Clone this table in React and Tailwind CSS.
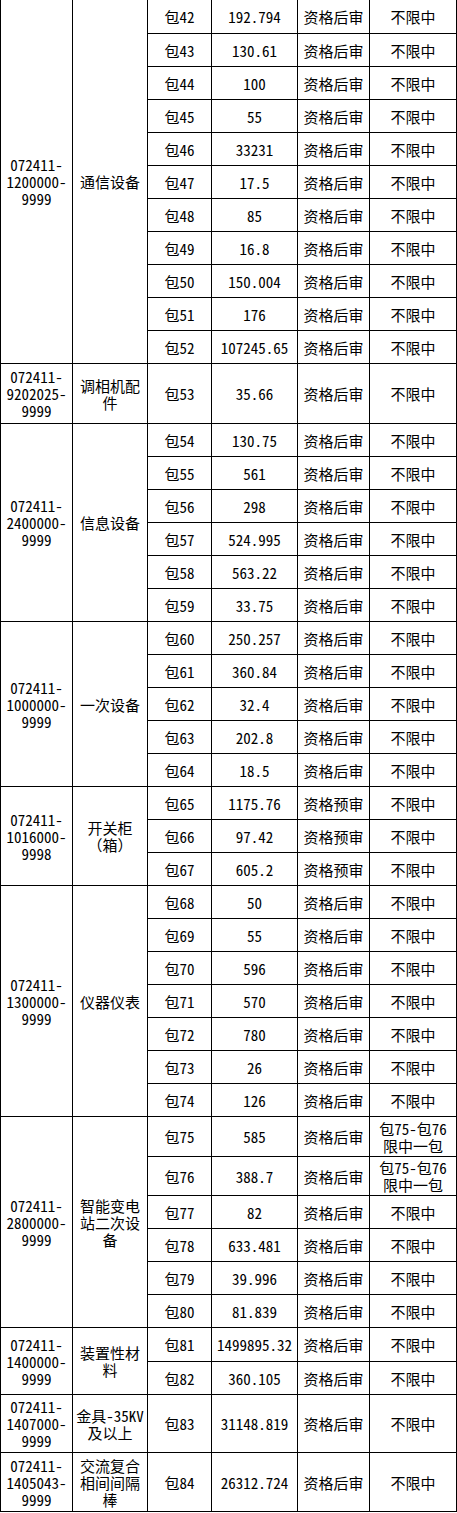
import React from "react";

const groups = [
  { code: ["072411-", "1200000-", "9999"], name: ["通信设备"], span: "row-span-11", rows: [
    ["包42", "192.794"], ["包43", "130.61"], ["包44", "100"], ["包45", "55"], ["包46", "33231"], ["包47", "17.5"], ["包48", "85"], ["包49", "16.8"], ["包50", "150.004"], ["包51", "176"], ["包52", "107245.65"],
  ]},
  { code: ["072411-", "9202025-", "9999"], name: ["调相机配", "件"], span: "row-span-1", rows: [["包53", "35.66"]] },
  { code: ["072411-", "2400000-", "9999"], name: ["信息设备"], span: "row-span-6", rows: [
    ["包54", "130.75"], ["包55", "561"], ["包56", "298"], ["包57", "524.995"], ["包58", "563.22"], ["包59", "33.75"],
  ]},
  { code: ["072411-", "1000000-", "9999"], name: ["一次设备"], span: "row-span-5", rows: [
    ["包60", "250.257"], ["包61", "360.84"], ["包62", "32.4"], ["包63", "202.8"], ["包64", "18.5"],
  ]},
  { code: ["072411-", "1016000-", "9998"], name: ["开关柜", "（箱）"], span: "row-span-3", rows: [
    ["包65", "1175.76", "资格预审"], ["包66", "97.42", "资格预审"], ["包67", "605.2", "资格预审"],
  ]},
  { code: ["072411-", "1300000-", "9999"], name: ["仪器仪表"], span: "row-span-7", rows: [
    ["包68", "50"], ["包69", "55"], ["包70", "596"], ["包71", "570"], ["包72", "780"], ["包73", "26"], ["包74", "126"],
  ]},
  { code: ["072411-", "2800000-", "9999"], name: ["智能变电", "站二次设", "备"], span: "row-span-6", rows: [
    ["包75", "585", "资格后审", ["包75-包76", "限中一包"]], ["包76", "388.7", "资格后审", ["包75-包76", "限中一包"]], ["包77", "82"], ["包78", "633.481"], ["包79", "39.996"], ["包80", "81.839"],
  ]},
  { code: ["072411-", "1400000-", "9999"], name: ["装置性材", "料"], span: "row-span-2", rows: [["包81", "1499895.32"], ["包82", "360.105"]] },
  { code: ["072411-", "1407000-", "9999"], name: ["金具-35KV", "及以上"], span: "row-span-1", rows: [["包83", "31148.819"]] },
  { code: ["072411-", "1405043-", "9999"], name: ["交流复合", "相间间隔", "棒"], span: "row-span-1", rows: [["包84", "26312.724"]] },
];

function Lines({ lines }) {
  return lines.map((l, i) => (
    <React.Fragment key={i}>
      {i > 0 && <br />}
      {l}
    </React.Fragment>
  ));
}

const cell = "bg-white flex items-center justify-center text-center";

export default function App() {
  return (
    <div
      className="w-[457px] h-[1513px] bg-white text-black text-[15px] leading-[17px]"
      style={{ fontFamily: '"Noto Sans Mono CJK SC", "Noto Sans CJK SC", "DejaVu Sans Mono", monospace' }}
    >
      <div className="grid grid-cols-[71px_74px_63px_85px_71px_86px] grid-rows-[33px_repeat(10,32px)_59px_repeat(21,32px)_39px_38px_repeat(4,32px)_33px_32px_57px_58px] gap-px bg-black px-px pb-px w-[457px]">
        {groups.map((g, gi) => (
          <React.Fragment key={gi}>
            <div className={`${cell} ${g.span} col-start-1`}>
              <div><Lines lines={g.code} /></div>
            </div>
            <div className={`${cell} ${g.span} col-start-2`}>
              <div><Lines lines={g.name} /></div>
            </div>
            {g.rows.map((r, ri) => (
              <React.Fragment key={ri}>
                <div className={`${cell} col-start-3`}>{r[0]}</div>
                <div className={`${cell} col-start-4`}>{r[1]}</div>
                <div className={`${cell} col-start-5`}>{r[2] || "资格后审"}</div>
                <div className={`${cell} col-start-6`}>
                  <div><Lines lines={r[3] || ["不限中"]} /></div>
                </div>
              </React.Fragment>
            ))}
          </React.Fragment>
        ))}
      </div>
    </div>
  );
}
